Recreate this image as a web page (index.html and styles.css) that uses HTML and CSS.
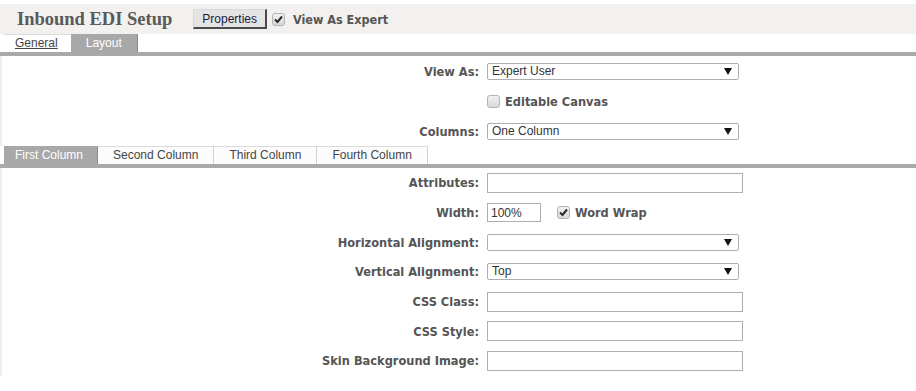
FILE: index.html
```html
<!DOCTYPE html>
<html lang="en">
  <head>
    <meta charset="UTF-8" />
    <title>Inbound EDI Setup</title>
    <link rel="stylesheet" href="styles.css">
  </head>
  <body>
    <div class="head">
      <h1 class="title">Inbound EDI Setup</h1>
      <button class="propBtn">Properties</button>
      <span class="cb headCb"><svg width="11" height="11" viewBox="0 0 11 11"><path d="M2 5.5 L4.5 8 L9 2.5" fill="none" stroke="#2b2b2b" stroke-width="2"/></svg></span>
      <span class="headLabel">View As Expert</span>
    </div>

    <div class="tabs">
      <a class="tab tabLink">General</a>
      <span class="tab active">Layout</span>
    </div>

    <div class="form topForm">
      <label class="lbl">View As:</label>
      <div class="sel">Expert User</div>

      <span></span>
      <div class="cbRow">
        <span class="cb"></span>
        <span class="cbText">Editable Canvas</span>
      </div>

      <label class="lbl">Columns:</label>
      <div class="sel">One Column</div>
    </div>

    <div class="tabs colTabs">
      <span class="tab active first">First Column</span>
      <span class="tab">Second Column</span>
      <span class="tab">Third Column</span>
      <span class="tab">Fourth Column</span>
    </div>

    <div class="form bottomForm">
      <label class="lbl">Attributes:</label>
      <input class="txt" type="text" />

      <label class="lbl">Width:</label>
      <div class="cbRow">
        <input class="txt small" type="text" value="100%" />
        <span class="cb wrapCb"><svg width="11" height="11" viewBox="0 0 11 11"><path d="M2 5.5 L4.5 8 L9 2.5" fill="none" stroke="#2b2b2b" stroke-width="2"/></svg></span>
        <span class="cbText">Word Wrap</span>
      </div>

      <label class="lbl">Horizontal Alignment:</label>
      <div class="sel"></div>

      <label class="lbl">Vertical Alignment:</label>
      <div class="sel">Top</div>

      <label class="lbl">CSS Class:</label>
      <input class="txt" type="text" />

      <label class="lbl">CSS Style:</label>
      <input class="txt" type="text" />

      <label class="lbl">Skin Background Image:</label>
      <input class="txt" type="text" />
    </div>
  </body>
</html>
```

FILE: styles.css
```css
body {
  margin: 0;
  font-family: "DejaVu Sans Condensed", "DejaVu Sans", sans-serif;
  color: #555;
  background: #fff;
}
.head {
  display: flex;
  align-items: center;
  height: 30px;
  margin-top: 4px;
  padding-left: 17px;
  background: #f2f1ef;
}
.title {
  margin: 0;
  font-family: "Liberation Serif", serif;
  font-size: 18.5px;
  font-weight: bold;
  color: #5a5a5a;
}
.propBtn {
  margin-left: 21px;
  height: 20px;
  padding: 0 8px;
  font-family: "Liberation Sans", sans-serif;
  font-size: 12px;
  color: #1c1c3a;
  background: #e4e4e4;
  border: 1px solid #d8d8d8;
  border-right: 2px solid #4a4a4a;
  border-bottom: 2px solid #4a4a4a;
  border-radius: 0;
}
.headCb {
  margin-left: 5px;
}
.headLabel {
  margin-left: 8px;
  font-weight: bold;
  font-size: 12.5px;
}
.cb {
  display: inline-flex;
  align-items: center;
  justify-content: center;
  width: 13px;
  height: 13px;
  box-sizing: border-box;
  border: 1px solid #b3b3b3;
  border-radius: 3px;
  background: linear-gradient(#f2f2f2, #d9d9d9);
}
.tabs {
  display: flex;
  height: 18px;
  padding-left: 4px;
  border-bottom: 4px solid #a9a9a9;
  font-family: "Liberation Sans", sans-serif;
  font-size: 12px;
}
.tab {
  line-height: 17px;
  padding: 0 13px;
  border-top: 1px solid #dcdcdc;
  color: #444;
}
.tabLink {
  padding: 0 13px 0 11px;
  text-decoration: underline;
}
.tab.active {
  padding: 0 15px;
  background: #a8a8a8;
  border-top-color: #a8a8a8;
  border-right: 1px solid #8c8c8c;
  color: #fff;
}
.form {
  display: grid;
  grid-template-columns: 477px auto;
  column-gap: 8px;
  align-items: center;
  justify-items: start;
  border-left: 2px solid #eee;
}
.topForm {
  grid-auto-rows: 30px;
}
.bottomForm {
  grid-auto-rows: 29.7px;
}
.lbl {
  justify-self: end;
  font-weight: bold;
  font-size: 12.7px;
  color: #555;
}
.sel {
  position: relative;
  width: 252px;
  height: 17px;
  box-sizing: border-box;
  padding-left: 4px;
  border: 1px solid #adadad;
  border-radius: 2px;
  font-family: "Liberation Sans", sans-serif;
  font-size: 12px;
  line-height: 15px;
  color: #333;
}
.sel::after {
  content: "";
  position: absolute;
  right: 6px;
  top: 4px;
  border-left: 4px solid transparent;
  border-right: 4px solid transparent;
  border-top: 7px solid #111;
}
.txt {
  width: 256px;
  height: 20px;
  box-sizing: border-box;
  margin: 0;
  padding: 0 3px;
  border: 1px solid #adadad;
  font-family: "Liberation Sans", sans-serif;
  font-size: 12px;
  color: #333;
}
.txt.small {
  width: 54px;
  height: 19px;
}
.cbRow {
  display: flex;
  align-items: center;
}
.cbText {
  margin-left: 5px;
  font-weight: bold;
  font-size: 12.7px;
}
.wrapCb {
  margin-left: 16px;
}
.colTabs .tab {
  padding: 0 15px;
  border-right: 1px solid #d0d0d0;
  background: #fcfcfc;
}
.colTabs .tab.active {
  padding: 0 14px 0 11px;
  background: #a8a8a8;
  border-right-color: #8c8c8c;
}
```
